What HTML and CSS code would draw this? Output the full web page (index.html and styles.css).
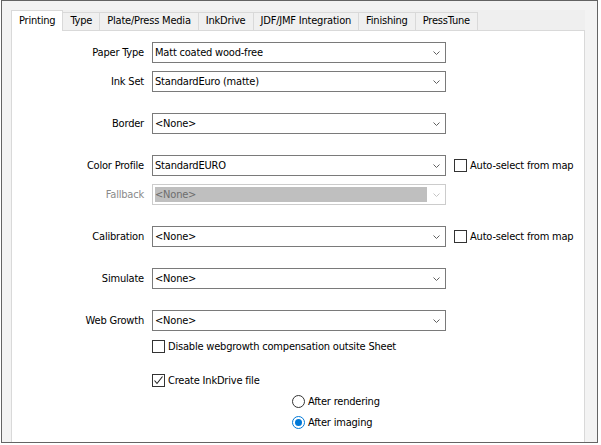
FILE: index.html
```html
<!DOCTYPE html>
<html lang="en">
<head>
    <meta charset="UTF-8">
    <meta name="viewport" content="width=device-width, initial-scale=1.0">
    <title>Printing settings</title>
    <link rel="stylesheet" href="styles.css">
</head>
<body>
    <div class="window">
        <!-- tab headers -->
        <div class="tab-strip">
            <div class="tab active">Printing</div>
            <div class="tab">Type</div>
            <div class="tab">Plate/Press Media</div>
            <div class="tab">InkDrive</div>
            <div class="tab">JDF/JMF Integration</div>
            <div class="tab">Finishing</div>
            <div class="tab">PressTune</div>
        </div>
        <!-- Printing page -->
        <div class="panel">
            <div class="row">
                <span class="label">Paper Type</span>
                <div class="combo"><span class="value">Matt coated wood-free</span><svg class="arrow" width="7" height="4" viewBox="0 0 7 4"><polyline points="0.5,0.5 3.5,3.5 6.5,0.5" fill="none" stroke="currentColor" stroke-width="1"/></svg></div>
            </div>
            <div class="row">
                <span class="label">Ink Set</span>
                <div class="combo"><span class="value">StandardEuro (matte)</span><svg class="arrow" width="7" height="4" viewBox="0 0 7 4"><polyline points="0.5,0.5 3.5,3.5 6.5,0.5" fill="none" stroke="currentColor" stroke-width="1"/></svg></div>
            </div>
            <div class="row sep">
                <span class="label">Border</span>
                <div class="combo"><span class="value">&lt;None&gt;</span><svg class="arrow" width="7" height="4" viewBox="0 0 7 4"><polyline points="0.5,0.5 3.5,3.5 6.5,0.5" fill="none" stroke="currentColor" stroke-width="1"/></svg></div>
            </div>
            <div class="row sep">
                <span class="label">Color Profile</span>
                <div class="combo"><span class="value">StandardEURO</span><svg class="arrow" width="7" height="4" viewBox="0 0 7 4"><polyline points="0.5,0.5 3.5,3.5 6.5,0.5" fill="none" stroke="currentColor" stroke-width="1"/></svg></div>
                <div class="check"><span class="box"></span>Auto-select from map</div>
            </div>
            <div class="row disabled">
                <span class="label">Fallback</span>
                <div class="combo"><span class="value">&lt;None&gt;</span><svg class="arrow" width="7" height="4" viewBox="0 0 7 4"><polyline points="0.5,0.5 3.5,3.5 6.5,0.5" fill="none" stroke="currentColor" stroke-width="1"/></svg></div>
            </div>
            <div class="row sep">
                <span class="label">Calibration</span>
                <div class="combo"><span class="value">&lt;None&gt;</span><svg class="arrow" width="7" height="4" viewBox="0 0 7 4"><polyline points="0.5,0.5 3.5,3.5 6.5,0.5" fill="none" stroke="currentColor" stroke-width="1"/></svg></div>
                <div class="check"><span class="box"></span>Auto-select from map</div>
            </div>
            <div class="row sep">
                <span class="label">Simulate</span>
                <div class="combo"><span class="value">&lt;None&gt;</span><svg class="arrow" width="7" height="4" viewBox="0 0 7 4"><polyline points="0.5,0.5 3.5,3.5 6.5,0.5" fill="none" stroke="currentColor" stroke-width="1"/></svg></div>
            </div>
            <div class="row sep">
                <span class="label">Web Growth</span>
                <div class="combo"><span class="value">&lt;None&gt;</span><svg class="arrow" width="7" height="4" viewBox="0 0 7 4"><polyline points="0.5,0.5 3.5,3.5 6.5,0.5" fill="none" stroke="currentColor" stroke-width="1"/></svg></div>
            </div>

            <div class="check option first"><span class="box"></span>Disable webgrowth compensation outsite Sheet</div>
            <div class="check option sep-check"><span class="box checked"><svg width="11" height="11" viewBox="0 0 11 11"><polyline points="1.5,5.5 4,8.5 9.5,1.5" fill="none" stroke="#222" stroke-width="1.1"/></svg></span>Create InkDrive file</div>
            <div class="radio option sub"><span class="dot"></span>After rendering</div>
            <div class="radio option sub"><span class="dot selected"></span>After imaging</div>
        </div>
    </div>
</body>
</html>
```
FILE: styles.css
```css
body {
    margin: 0;
    background: #ffffff;
    font-family: 'DejaVu Sans Condensed', 'DejaVu Sans', sans-serif;
    font-stretch: condensed;
    font-size: 11px;
    letter-spacing: -0.2px;
    color: #000;
}
.window {
    box-sizing: border-box;
    width: 597px;
    height: 443px;
    margin-left: 1px;
    border: 1px solid #646464;
    background: #f3f3f3;
    padding: 9px 12px 0 9px;
    overflow: hidden;
}
/* tabs */
.tab-strip {
    display: flex;
    align-items: flex-end;
    height: 20px;
    background: #efefef;
}
.tab {
    box-sizing: border-box;
    height: 18px;
    line-height: 16px;
    padding: 0 7px;
    margin-left: -1px;
    border: 1px solid #d9d9d9;
    border-bottom: none;
    background: #f0f0f0;
    white-space: nowrap;
}
.tab.active {
    height: 21px;
    line-height: 19px;
    margin-left: 0;
    margin-bottom: -1px;
    padding: 0 7px;
    background: #ffffff;
    position: relative;
    z-index: 1;
}
.panel {
    height: 420px;
    border: 1px solid #d9d9d9;
    background: #ffffff;
    padding-top: 11px;
}
/* form rows */
.row {
    display: grid;
    grid-template-columns: 132px 294px auto;
    column-gap: 8px;
    align-items: center;
    height: 21px;
    margin-top: 8px;
}
.row:first-child {
    margin-top: 0;
}
.row.sep {
    margin-top: 21px;
}
.label {
    text-align: right;
}
.combo {
    box-sizing: border-box;
    height: 21px;
    border: 1px solid #7a7a7a;
    display: flex;
    align-items: center;
    justify-content: space-between;
    padding: 0 5px 0 2px;
    color: #000;
}
.arrow {
    color: #606060;
}
.row.disabled .label {
    color: #8a8a8a;
}
.row.disabled .combo {
    border-color: #cccccc;
    padding: 2px 5px 2px 2px;
    color: #6d6d6d;
}
.row.disabled .value {
    flex: 0 0 272px;
    height: 15px;
    line-height: 15px;
    background: #bfbfbf;
}
.row.disabled .arrow {
    color: #c4c4c4;
}
/* checkboxes and radios */
.check, .radio {
    display: flex;
    align-items: center;
    gap: 3px;
    white-space: nowrap;
}
.box {
    box-sizing: border-box;
    width: 13px;
    height: 13px;
    border: 1px solid #333333;
    background: #ffffff;
    display: flex;
    align-items: center;
    justify-content: center;
}
.option {
    margin-left: 140px;
    height: 13px;
}
.option.first {
    margin-top: 9px;
}
.option.sep-check {
    margin-top: 21px;
}
.option.sub {
    margin-left: 280px;
    margin-top: 8px;
}
.dot {
    box-sizing: border-box;
    width: 13px;
    height: 13px;
    border: 1px solid #333333;
    border-radius: 50%;
    background: #ffffff;
    display: flex;
    align-items: center;
    justify-content: center;
}
.dot.selected {
    border-color: #0078d7;
}
.dot.selected::after {
    content: '';
    width: 7px;
    height: 7px;
    border-radius: 50%;
    background: #0078d7;
}
```
